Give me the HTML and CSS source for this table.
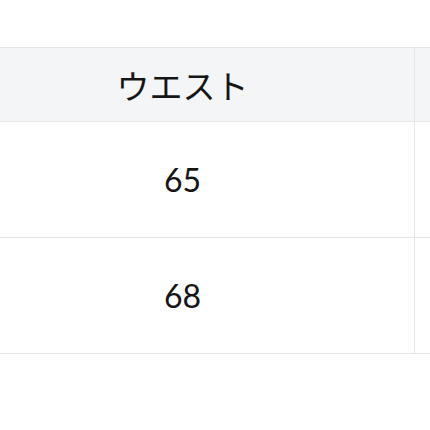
FILE: index.html
```html
<!DOCTYPE html>
<html lang="ja">
<head>
<meta charset="utf-8">
<link rel="stylesheet" href="styles.css">
</head>
<body>
<div class="wrap">
<table class="size-table">
  <colgroup><col class="col-main"><col class="col-next"></colgroup>
  <thead>
    <tr><th>ウエスト</th><th></th></tr>
  </thead>
  <tbody>
    <tr><td>65</td><td></td></tr>
    <tr><td>68</td><td></td></tr>
  </tbody>
</table>
</div>
</body>
</html>
```
FILE: styles.css
```css
html, body {
  margin: 0;
  padding: 0;
  background: #ffffff;
  overflow: hidden;
  width: 430px;
  height: 430px;
}
.wrap {
  padding-top: 47px;
  margin-left: -50px;
  width: 800px;
}
.size-table {
  border-collapse: collapse;
  table-layout: fixed;
  width: 664px;
  font-family: Lato, "Noto Sans CJK JP", sans-serif;
  color: #151515;
}
.size-table th,
.size-table td {
  border: 1px solid #e4e6e8;
  text-align: center;
  padding: 0;
  font-weight: 400;
  font-size: 32px;
}
.size-table th {
  background: #f3f5f7;
  height: 73px;
  font-size: 33px;
  font-family: "Noto Sans CJK JP", sans-serif;
}
.size-table td {
  height: 115px;
}
.col-main { width: 464px; }
.col-next { width: 200px; }
```
